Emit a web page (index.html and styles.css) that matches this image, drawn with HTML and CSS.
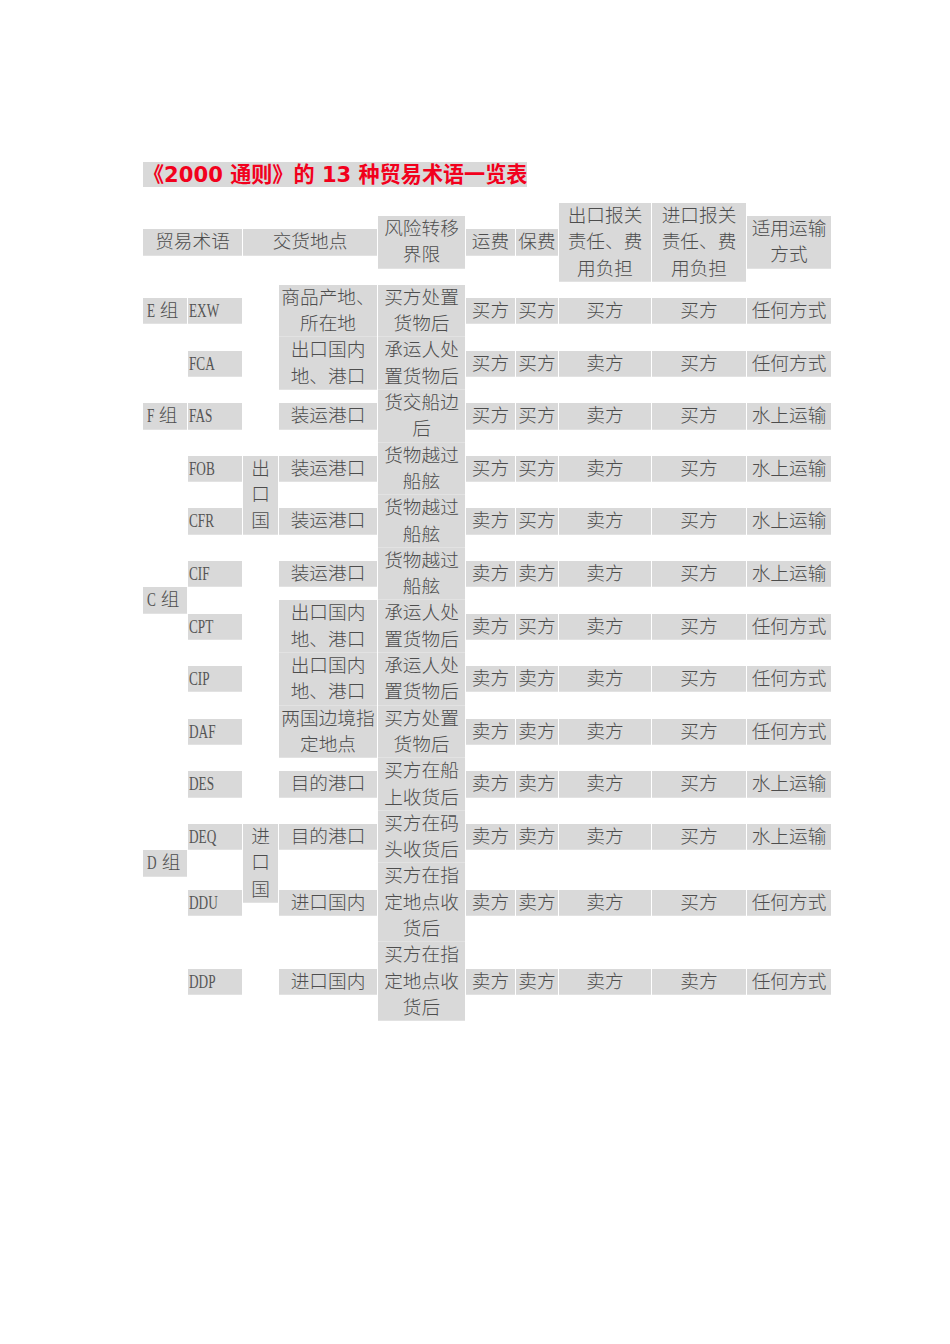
FILE: index.html
```html
<!DOCTYPE html>
<html lang="zh-CN">
<head>
<meta charset="utf-8">
<title>《2000通则》的13种贸易术语一览表</title>
<link rel="stylesheet" href="styles.css">
</head>
<body>
<div class="page">
  <h1 class="title"><span class="hl">《<b class="num">2000</b> 通则》的 <b class="num">13</b> 种贸易术语一览表</span></h1>
  <table class="terms">
    <colgroup>
      <col class="c1"><col class="c2"><col class="c3"><col class="c4"><col class="c5">
      <col class="c6"><col class="c7"><col class="c8"><col class="c9"><col class="c10">
    </colgroup>
    <tbody>
      <tr class="head">
        <td colspan="2"><div class="s">贸易术语</div></td>
        <td colspan="2"><div class="s">交货地点</div></td>
        <td><div class="s">风险转移<br>界限</div></td>
        <td><div class="s">运费</div></td>
        <td><div class="s">保费</div></td>
        <td><div class="s">出口报关<br>责任、费<br>用负担</div></td>
        <td><div class="s">进口报关<br>责任、费<br>用负担</div></td>
        <td><div class="s">适用运输<br>方式</div></td>
      </tr>
      <tr>
        <td><div class="s g"><span class="lat">E</span> 组</div></td>
        <td><div class="s t"><span class="lat">EXW</span></div></td>
        <td rowspan="8"><div class="s">出<br>口<br>国</div></td>
        <td><div class="s">商品产地、<br>所在地</div></td>
        <td><div class="s">买方处置<br>货物后</div></td>
        <td><div class="s">买方</div></td><td><div class="s">买方</div></td><td><div class="s">买方</div></td><td><div class="s">买方</div></td><td><div class="s">任何方式</div></td>
      </tr>
      <tr>
        <td rowspan="3"><div class="s g"><span class="lat">F</span> 组</div></td>
        <td><div class="s t"><span class="lat">FCA</span></div></td>
        <td><div class="s">出口国内<br>地、港口</div></td>
        <td><div class="s">承运人处<br>置货物后</div></td>
        <td><div class="s">买方</div></td><td><div class="s">买方</div></td><td><div class="s">卖方</div></td><td><div class="s">买方</div></td><td><div class="s">任何方式</div></td>
      </tr>
      <tr>
        <td><div class="s t"><span class="lat">FAS</span></div></td>
        <td><div class="s">装运港口</div></td>
        <td><div class="s">货交船边<br>后</div></td>
        <td><div class="s">买方</div></td><td><div class="s">买方</div></td><td><div class="s">卖方</div></td><td><div class="s">买方</div></td><td><div class="s">水上运输</div></td>
      </tr>
      <tr>
        <td><div class="s t"><span class="lat">FOB</span></div></td>
        <td><div class="s">装运港口</div></td>
        <td><div class="s">货物越过<br>船舷</div></td>
        <td><div class="s">买方</div></td><td><div class="s">买方</div></td><td><div class="s">卖方</div></td><td><div class="s">买方</div></td><td><div class="s">水上运输</div></td>
      </tr>
      <tr>
        <td rowspan="4"><div class="s g"><span class="lat">C</span> 组</div></td>
        <td><div class="s t"><span class="lat">CFR</span></div></td>
        <td><div class="s">装运港口</div></td>
        <td><div class="s">货物越过<br>船舷</div></td>
        <td><div class="s">卖方</div></td><td><div class="s">买方</div></td><td><div class="s">卖方</div></td><td><div class="s">买方</div></td><td><div class="s">水上运输</div></td>
      </tr>
      <tr>
        <td><div class="s t"><span class="lat">CIF</span></div></td>
        <td><div class="s">装运港口</div></td>
        <td><div class="s">货物越过<br>船舷</div></td>
        <td><div class="s">卖方</div></td><td><div class="s">卖方</div></td><td><div class="s">卖方</div></td><td><div class="s">买方</div></td><td><div class="s">水上运输</div></td>
      </tr>
      <tr>
        <td><div class="s t"><span class="lat">CPT</span></div></td>
        <td><div class="s">出口国内<br>地、港口</div></td>
        <td><div class="s">承运人处<br>置货物后</div></td>
        <td><div class="s">卖方</div></td><td><div class="s">买方</div></td><td><div class="s">卖方</div></td><td><div class="s">买方</div></td><td><div class="s">任何方式</div></td>
      </tr>
      <tr>
        <td><div class="s t"><span class="lat">CIP</span></div></td>
        <td><div class="s">出口国内<br>地、港口</div></td>
        <td><div class="s">承运人处<br>置货物后</div></td>
        <td><div class="s">卖方</div></td><td><div class="s">卖方</div></td><td><div class="s">卖方</div></td><td><div class="s">买方</div></td><td><div class="s">任何方式</div></td>
      </tr>
      <tr>
        <td rowspan="5"><div class="s g"><span class="lat">D</span> 组</div></td>
        <td><div class="s t"><span class="lat">DAF</span></div></td>
        <td rowspan="5"><div class="s">进<br>口<br>国</div></td>
        <td><div class="s">两国边境指<br>定地点</div></td>
        <td><div class="s">买方处置<br>货物后</div></td>
        <td><div class="s">卖方</div></td><td><div class="s">卖方</div></td><td><div class="s">卖方</div></td><td><div class="s">买方</div></td><td><div class="s">任何方式</div></td>
      </tr>
      <tr>
        <td><div class="s t"><span class="lat">DES</span></div></td>
        <td><div class="s">目的港口</div></td>
        <td><div class="s">买方在船<br>上收货后</div></td>
        <td><div class="s">卖方</div></td><td><div class="s">卖方</div></td><td><div class="s">卖方</div></td><td><div class="s">买方</div></td><td><div class="s">水上运输</div></td>
      </tr>
      <tr>
        <td><div class="s t"><span class="lat">DEQ</span></div></td>
        <td><div class="s">目的港口</div></td>
        <td><div class="s">买方在码<br>头收货后</div></td>
        <td><div class="s">卖方</div></td><td><div class="s">卖方</div></td><td><div class="s">卖方</div></td><td><div class="s">买方</div></td><td><div class="s">水上运输</div></td>
      </tr>
      <tr>
        <td><div class="s t"><span class="lat">DDU</span></div></td>
        <td><div class="s">进口国内</div></td>
        <td><div class="s">买方在指<br>定地点收<br>货后</div></td>
        <td><div class="s">卖方</div></td><td><div class="s">卖方</div></td><td><div class="s">卖方</div></td><td><div class="s">买方</div></td><td><div class="s">任何方式</div></td>
      </tr>
      <tr>
        <td><div class="s t"><span class="lat">DDP</span></div></td>
        <td><div class="s">进口国内</div></td>
        <td><div class="s">买方在指<br>定地点收<br>货后</div></td>
        <td><div class="s">卖方</div></td><td><div class="s">卖方</div></td><td><div class="s">卖方</div></td><td><div class="s">卖方</div></td><td><div class="s">任何方式</div></td>
      </tr>
    </tbody>
  </table>
</div>
</body>
</html>
```
FILE: styles.css
```css
html, body {
  margin: 0;
  padding: 0;
  background: #ffffff;
}

.page {
  padding: 162px 0 0 143px;
  width: 950px;
  box-sizing: border-box;
}

.title {
  margin: 0;
  font-family: "DejaVu Sans", "Noto Sans CJK SC", sans-serif;
  font-size: 21.1px;
  line-height: 25px;
  font-weight: bold;
  color: #f2001c;
  white-space: nowrap;
}

.title .hl {
  background: #d9d9d9;
  display: inline-block;
  height: 25px;
}

.title .num {
  font-weight: bold;
}

.terms {
  margin: 16px 0 0 -1px;
  border-collapse: separate;
  border-spacing: 1px 0;
  table-layout: fixed;
  width: 690px;
  font-family: "Liberation Serif", "Noto Sans CJK SC", serif;
  font-size: 18.67px;
  font-weight: 300;
  color: #4d4d4d;
}

.terms td {
  padding: 0;
  vertical-align: middle;
}

.terms .head td {
  padding-bottom: 3px;
}

col.c1 { width: 44px; }
col.c2 { width: 54px; }
col.c3 { width: 35px; }
col.c4 { width: 98px; }
col.c5 { width: 87px; }
col.c6 { width: 49px; }
col.c7 { width: 42px; }
col.c8 { width: 92px; }
col.c9 { width: 94px; }
col.c10 { width: 84px; }

.s {
  background: #d9d9d9;
  line-height: 26.3px;
  text-align: center;
  white-space: nowrap;
  overflow: hidden;
  box-shadow: inset 0 -1px 0 #e2e2e2;
}

.s.g {
  text-align: left;
  padding-left: 4px;
}

.s.t {
  text-align: left;
  padding-left: 1px;
}

.lat {
  display: inline-block;
  font-family: "Liberation Serif", serif;
  font-weight: normal;
  font-size: 19.5px;
  color: #555555;
  transform: scaleX(0.68);
  transform-origin: left center;
  margin-right: -0.2em;
}
```
